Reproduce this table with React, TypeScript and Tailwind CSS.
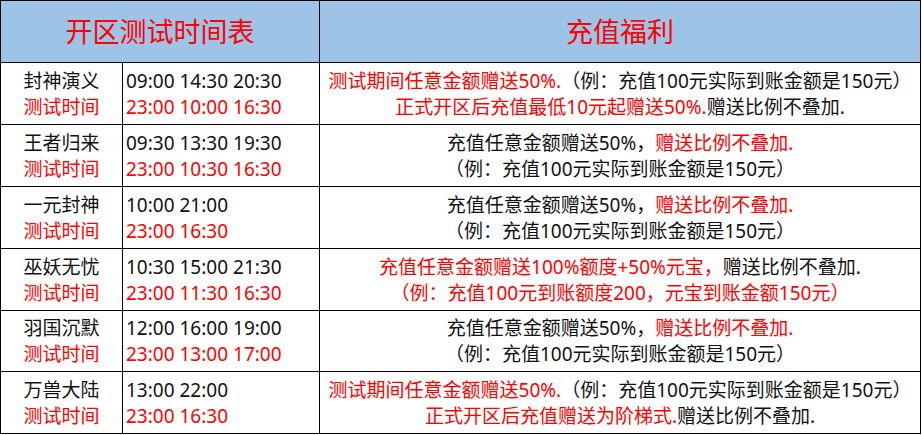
import React from "react";

const R = ({ children }: { children: React.ReactNode }) => (
  <span className="text-[#ff0000]">{children}</span>
);

type Row = {
  name: string;
  t1: string;
  t2: string;
  b1: React.ReactNode;
  b2: React.ReactNode;
  h: string;
};

const std1 = (
  <>
    充值任意金额赠送50%，<R>赠送比例不叠加.</R>
  </>
);
const std2 = <>（例：充值100元实际到账金额是150元）</>;

const rows: Row[] = [
  {
    name: "封神演义",
    t1: "09:00 14:30 20:30",
    t2: "23:00 10:00 16:30",
    b1: (
      <>
        <R>测试期间任意金额赠送50%.</R>（例：充值100元实际到账金额是150元）
      </>
    ),
    b2: (
      <>
        <R>正式开区后充值最低10元起赠送50%.</R>赠送比例不叠加.
      </>
    ),
    h: "h-[61px]",
  },
  { name: "王者归来", t1: "09:30 13:30 19:30", t2: "23:00 10:30 16:30", b1: std1, b2: std2, h: "h-[61px]" },
  { name: "一元封神", t1: "10:00 21:00", t2: "23:00 16:30", b1: std1, b2: std2, h: "h-[61px]" },
  {
    name: "巫妖无忧",
    t1: "10:30 15:00 21:30",
    t2: "23:00 11:30 16:30",
    b1: (
      <>
        <R>充值任意金额赠送100%额度+50%元宝，</R>赠送比例不叠加.
      </>
    ),
    b2: <R>（例：充值100元到账额度200，元宝到账金额150元）</R>,
    h: "h-[61px]",
  },
  { name: "羽国沉默", t1: "12:00 16:00 19:00", t2: "23:00 13:00 17:00", b1: std1, b2: std2, h: "h-[60px]" },
  {
    name: "万兽大陆",
    t1: "13:00 22:00",
    t2: "23:00 16:30",
    b1: (
      <>
        <R>测试期间任意金额赠送50%.</R>（例：充值100元实际到账金额是150元）
      </>
    ),
    b2: (
      <>
        <R>正式开区后充值赠送为阶梯式.</R>赠送比例不叠加.
      </>
    ),
    h: "h-[61px]",
  },
];

export default function App() {
  return (
    <div
      className="w-[922px] h-[435px] bg-white"
      style={{ fontFamily: '"Noto Sans", "Noto Sans CJK SC", sans-serif' }}
    >
      <div className="inline-grid grid-cols-[121px_196px_600px] gap-px bg-black p-px text-[19px] leading-[26px] text-[#111]">
        <div className="col-span-2 h-[61px] bg-[#9dc3e6] flex items-center justify-center text-[27px] text-[#ff0000]">
          开区测试时间表
        </div>
        <div className="h-[61px] bg-[#9dc3e6] flex items-center justify-center text-[27px] text-[#ff0000]">
          充值福利
        </div>
        {rows.map((r) => (
          <React.Fragment key={r.name}>
            <div className={`${r.h} bg-white flex flex-col items-center justify-center`}>
              <div>{r.name}</div>
              <div className="text-[#ff0000]">测试时间</div>
            </div>
            <div className={`${r.h} bg-white flex flex-col justify-center pl-[3px]`}>
              <div>{r.t1}</div>
              <div className="text-[#ff0000]">{r.t2}</div>
            </div>
            <div className={`${r.h} bg-white flex flex-col items-center justify-center whitespace-nowrap`}>
              <div>{r.b1}</div>
              <div>{r.b2}</div>
            </div>
          </React.Fragment>
        ))}
      </div>
    </div>
  );
}
